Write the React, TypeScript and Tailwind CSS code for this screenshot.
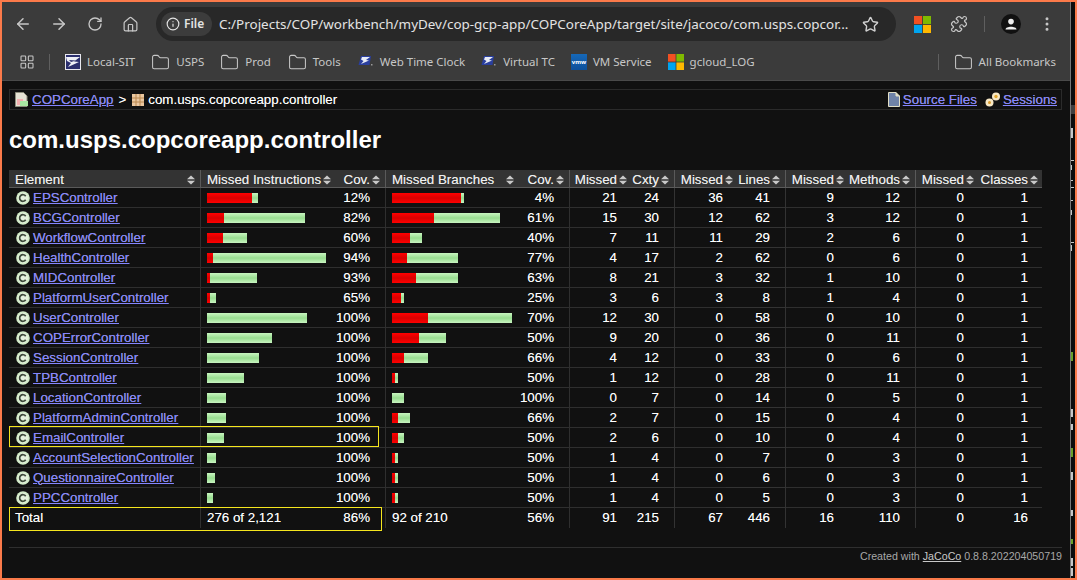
import React from "react";
import { ArrowLeft, ArrowRight, RotateCw, House, Info, Star, Puzzle, Folder, EllipsisVertical, LayoutGrid } from "lucide-react";

type Row = {
  name: string;
  mi: [number, number];
  cov: string;
  mb: [number, number];
  bcov: string;
  nums: number[];
};

const rows: Row[] = [
  { name: "EPSController", mi: [45, 6], cov: "12%", mb: [69, 3], bcov: "4%", nums: [21, 24, 36, 41, 9, 12, 0, 1] },
  { name: "BCGController", mi: [17, 81], cov: "82%", mb: [42, 66], bcov: "61%", nums: [15, 30, 12, 62, 3, 12, 0, 1] },
  { name: "WorkflowController", mi: [16, 24], cov: "60%", mb: [18, 12], bcov: "40%", nums: [7, 11, 11, 29, 2, 6, 0, 1] },
  { name: "HealthController", mi: [6, 113], cov: "94%", mb: [15, 51], bcov: "77%", nums: [4, 17, 2, 62, 0, 6, 0, 1] },
  { name: "MIDController", mi: [3, 47], cov: "93%", mb: [24, 42], bcov: "63%", nums: [8, 21, 3, 32, 1, 10, 0, 1] },
  { name: "PlatformUserController", mi: [3, 6], cov: "65%", mb: [9, 3], bcov: "25%", nums: [3, 6, 3, 8, 1, 4, 0, 1] },
  { name: "UserController", mi: [0, 100], cov: "100%", mb: [36, 84], bcov: "70%", nums: [12, 30, 0, 58, 0, 10, 0, 1] },
  { name: "COPErrorController", mi: [0, 65], cov: "100%", mb: [27, 27], bcov: "50%", nums: [9, 20, 0, 36, 0, 11, 0, 1] },
  { name: "SessionController", mi: [0, 52], cov: "100%", mb: [12, 24], bcov: "66%", nums: [4, 12, 0, 33, 0, 6, 0, 1] },
  { name: "TPBController", mi: [0, 37], cov: "100%", mb: [3, 3], bcov: "50%", nums: [1, 12, 0, 28, 0, 11, 0, 1] },
  { name: "LocationController", mi: [0, 19], cov: "100%", mb: [0, 12], bcov: "100%", nums: [0, 7, 0, 14, 0, 5, 0, 1] },
  { name: "PlatformAdminController", mi: [0, 19], cov: "100%", mb: [6, 12], bcov: "66%", nums: [2, 7, 0, 15, 0, 4, 0, 1] },
  { name: "EmailController", mi: [0, 17], cov: "100%", mb: [6, 6], bcov: "50%", nums: [2, 6, 0, 10, 0, 4, 0, 1] },
  { name: "AccountSelectionController", mi: [0, 9], cov: "100%", mb: [3, 3], bcov: "50%", nums: [1, 4, 0, 7, 0, 3, 0, 1] },
  { name: "QuestionnaireController", mi: [0, 8], cov: "100%", mb: [3, 3], bcov: "50%", nums: [1, 4, 0, 6, 0, 3, 0, 1] },
  { name: "PPCController", mi: [0, 6], cov: "100%", mb: [3, 3], bcov: "50%", nums: [1, 4, 0, 5, 0, 3, 0, 1] },
];

const totals = [91, 215, 67, 446, 16, 110, 0, 16];
// right padding and divider for the 8 counter columns
const ctrCls = [
  "pr-[3px]",
  "pr-[15px] border-r border-[#333]",
  "pr-[3px]",
  "pr-[15px] border-r border-[#333]",
  "pr-[3px]",
  "pr-[15px] border-r border-[#333]",
  "pr-[3px]",
  "pr-[14px]",
];
const ctrHead = ["Missed", "Cxty", "Missed", "Lines", "Missed", "Methods", "Missed", "Classes"];

const SortIcon = () => (
  <svg width="8" height="10" viewBox="0 0 8 10" className="shrink-0">
    <path d="M4 0.5 L8 4.2 H0 Z" fill="#c9c9c9" />
    <path d="M0 5.8 H8 L4 9.5 Z" fill="#c9c9c9" />
  </svg>
);

const ClassIcon = () => (
  <svg width="14" height="14" viewBox="0 0 14 14" className="shrink-0">
    <circle cx="7" cy="7" r="6.8" fill="#d3ecc9" />
    <circle cx="7" cy="7" r="5" fill="#e6f3df" />
    <path d="M9.7 5.2 A3.3 3.3 0 1 0 9.7 8.8" fill="none" stroke="#3d4a3a" strokeWidth="1.7" />
  </svg>
);

const UspsBoxIcon = () => (
  <svg width="16" height="16" viewBox="0 0 16 16" className="shrink-0">
    <rect width="16" height="16" fill="#e8e8ee" />
    <rect x="1" y="1" width="14" height="14" fill="#2b2f6e" />
    <path d="M1 3 H15 L9 7.5 L14 8 L3 13 L6 9 L2 7 Z" fill="#eef0f6" />
    <path d="M4 6 L11 6.5 L6 8 Z" fill="#2b2f6e" />
  </svg>
);

// small slanted eagle used by the two time-clock bookmarks
const UspsEagle = () => (
  <svg width="16" height="16" viewBox="0 0 16 16" className="shrink-0">
    <path d="M3 2 H13 L11.5 11 H0.5 Z" fill="#2a3f9e" />
    <path d="M4 3 H12 L8 6 L11 6.5 L3 10 L5.5 7 L3 5.5 Z" fill="#e8ecf6" />
    <rect x="13" y="10" width="1.5" height="1.5" fill="#9a9a9a" />
  </svg>
);

const MsLogo = ({ size = 16 }: { size?: number }) => (
  <svg width={size} height={size} viewBox="0 0 16 16" className="shrink-0">
    <rect width="7.6" height="7.6" fill="#f25022" />
    <rect x="8.4" width="7.6" height="7.6" fill="#7fba00" />
    <rect y="8.4" width="7.6" height="7.6" fill="#00a4ef" />
    <rect x="8.4" y="8.4" width="7.6" height="7.6" fill="#ffb900" />
  </svg>
);

const FolderIcon = () => <Folder size={19} strokeWidth={1.3} className="shrink-0 text-[#c7c7c7]" />;

const Bookmark = ({ icon, label, cls }: { icon: React.ReactNode; label: string; cls: string }) => (
  <div className={`flex items-center gap-[6px] ${cls}`}>
    {icon}
    <span>{label}</span>
  </div>
);

const Bar = ({ red, green }: { red: number; green: number }) => (
  <div className="flex h-[10px]">
    <div className="h-full bg-[linear-gradient(#ff0000,#d80000_50%,#ff0000)]" style={{ width: red }} />
    <div className="h-full bg-[linear-gradient(#c8f5c0,#98dd90_50%,#c8f5c0)]" style={{ width: green }} />
  </div>
);

const ReportIcon = () => (
  <svg width="14" height="15" viewBox="0 0 14 15" className="shrink-0">
    <path d="M0.5 0.5 H8.5 L12 4 V14.5 H0.5 Z" fill="#e6e2d4" stroke="#8d8d7c" />
    <rect x="2" y="7" width="6" height="6" fill="#f3b0b0" />
    <rect x="5" y="9" width="8" height="5" fill="#a9e8a3" />
  </svg>
);

const PackageIcon = () => (
  <svg width="12" height="12" viewBox="0 0 12 12" className="shrink-0">
    <rect width="12" height="12" fill="#eac7a0" />
    <path d="M4 0 V12 M8 0 V12 M0 4 H12 M0 8 H12" stroke="#b98850" strokeWidth="1" />
  </svg>
);

const SourceIcon = () => (
  <svg width="12" height="15" viewBox="0 0 12 15" className="shrink-0">
    <path d="M0.5 0.5 H8 L11.5 4 V14.5 H0.5 Z" fill="#6f83a8" stroke="#e2dfc6" />
    <path d="M8 0.5 V4 H11.5" fill="#e2dfc6" stroke="#e2dfc6" />
  </svg>
);

const SessionIcon = () => (
  <svg width="16" height="15" viewBox="0 0 16 15" className="shrink-0">
    <circle cx="4.5" cy="10.5" r="4" fill="#f7e7c4" />
    <circle cx="4.5" cy="10.5" r="1.5" fill="#d99a2b" />
    <circle cx="11" cy="4.5" r="4" fill="#f7e7c4" />
    <circle cx="11" cy="4.5" r="1.7" fill="#e3a72f" />
  </svg>
);

// fragments of the window behind, at the right edge
const EdgeSliver = () => (
  <svg width="4" height="576" viewBox="0 0 4 576" className="shrink-0 bg-[#0c0c0c]">
    <rect y="103" width="4" height="9" fill="#3f3f3f" />
    <g fill="#c8c8c8">
      <rect y="126" width="2" height="10" />
      <rect y="158" width="3" height="1" />
      <rect y="163" width="1" height="5" />
      <rect y="178" width="2" height="1" />
      <rect y="185" width="3" height="1" />
      <rect y="198" width="2" height="1" />
      <rect y="208" width="1" height="5" />
      <rect y="240" width="3" height="1" />
      <rect y="243" width="1" height="6" />
      <rect y="407" width="2" height="8" />
      <rect y="422" width="2" height="6" />
      <rect y="470" width="2" height="8" />
      <rect y="508" width="2" height="6" />
      <rect y="556" width="2" height="8" />
      <rect y="566" width="2" height="8" />
    </g>
    <g fill="#6aa12a">
      <rect y="350" width="2" height="9" />
      <rect y="446" width="2" height="9" />
      <rect y="537" width="2" height="5" />
    </g>
  </svg>
);

// 100% is wider than the space left of the padding, so it has to grow leftwards
const Pct = ({ value }: { value: string }) => <div className="flex justify-end whitespace-nowrap">{value}</div>;

export default function App() {
  const linkCls = "text-[#8585ff] underline";
  return (
    <div className="flex h-[580px] w-[1077px] overflow-hidden border-2 border-[#fb7a4a] bg-[#0c0c0c] font-['Liberation_Sans',Arial,sans-serif]">
      <div className="flex w-[1069px] shrink-0 flex-col border-r border-[#777]">
        {/* browser toolbar */}
        <div className="flex h-[79px] shrink-0 flex-col border-b border-[#4a4a4a] bg-[#3b3b3b] font-['Noto_Sans',sans-serif]">
          <div className="flex h-[42px] items-center pt-[2px] text-[#c7c7c7]">
            <div className="flex items-center pl-[12px]">
              <ArrowLeft size={18} className="mr-[18px]" />
              <ArrowRight size={18} className="mr-[18px]" />
              <RotateCw size={16} className="mr-[19px] ml-[1px]" />
              <House size={17} strokeWidth={1.7} />
            </div>
            <div className="ml-[17px] flex h-[34px] w-[740px] items-center rounded-full bg-[#282828] pl-[5px]">
              <div className="flex h-[24px] w-[51px] items-center gap-[4px] rounded-full bg-[#3c3c3c] pl-[5px] text-[12px] font-semibold text-[#e3e3e3]">
                <Info size={14} />
                <span>File</span>
              </div>
              <span className="ml-[7px] w-[627px] text-[13.45px] leading-[20px] whitespace-nowrap text-[#e3e3e3]">
                C:/Projects/COP/workbench/myDev/cop-gcp-app/COPCoreApp/target/site/jacoco/com.usps.copcor...
              </span>
              <Star size={17} className="ml-[16px] text-[#d0d0d0]" />
            </div>
            <div className="ml-[18px] flex items-center">
              <MsLogo size={17} />
              <Puzzle size={18} strokeWidth={1.6} className="ml-[19px]" />
              <div className="ml-[16px] h-[16px] w-[1px] bg-[#5f5f5f]" />
              <div className="ml-[16px] flex h-[20px] w-[20px] items-center justify-center rounded-full bg-[#111]">
                <svg width="12" height="12" viewBox="0 0 12 12">
                  <circle cx="6" cy="3.6" r="2.8" fill="#eee" />
                  <path d="M0.5 11.5 C0.5 7.8 11.5 7.8 11.5 11.5 Z" fill="#eee" />
                </svg>
              </div>
              <EllipsisVertical size={18} className="ml-[17px]" />
            </div>
          </div>
          <div className="flex h-[36px] items-center text-[11.5px] text-[#c7c7c7]">
            <LayoutGrid size={16} strokeWidth={1.6} className="ml-[17px]" />
            <div className="ml-[14px] h-[16px] w-[1px] bg-[#5f5f5f]" />
            <Bookmark cls="ml-[15px]" icon={<UspsBoxIcon />} label="Local-SIT" />
            <Bookmark cls="ml-[16px]" icon={<FolderIcon />} label="USPS" />
            <Bookmark cls="ml-[16px]" icon={<FolderIcon />} label="Prod" />
            <Bookmark cls="ml-[17px]" icon={<FolderIcon />} label="Tools" />
            <Bookmark cls="ml-[17px]" icon={<UspsEagle />} label="Web Time Clock" />
            <Bookmark cls="ml-[16px]" icon={<UspsEagle />} label="Virtual TC" />
            <Bookmark
              cls="ml-[16px]"
              icon={
                <span className="flex h-[16px] w-[16px] items-center justify-center bg-[linear-gradient(#1668b8,#0d4f9a)] text-[6px] font-bold text-white">
                  vmw
                </span>
              }
              label="VM Service"
            />
            <Bookmark cls="ml-[16px]" icon={<MsLogo />} label="gcloud_LOG" />
            <div className="ml-auto flex items-center pr-[14px]">
              <div className="mr-[15px] h-[16px] w-[1px] bg-[#5f5f5f]" />
              <Bookmark cls="" icon={<FolderIcon />} label="All Bookmarks" />
            </div>
          </div>
        </div>

        {/* jacoco page */}
        <div className="flex-1 bg-[#111] pt-[8px] pr-[7px] pl-[7px] text-[13.33px] leading-[16px] text-white [text-shadow:0_0_0.6px_rgba(255,255,255,0.55)]">
          <div className="mr-[1px] flex h-[21px] items-center border border-[#2b2b2b] pr-[4px] pl-[5px]">
            <ReportIcon />
            <a className={`ml-[3px] ${linkCls}`}>COPCoreApp</a>
            <span className="ml-[5px]">&gt;</span>
            <span className="ml-[6px]"><PackageIcon /></span>
            <span className="ml-[4px]">com.usps.copcoreapp.controller</span>
            <div className="ml-auto flex items-center">
              <SourceIcon />
              <a className={`ml-[3px] ${linkCls}`}>Source Files</a>
              <span className="ml-[8px]"><SessionIcon /></span>
              <a className={`ml-[2px] ${linkCls}`}>Sessions</a>
            </div>
          </div>

          <h1 className="mt-[15px] h-[30px] text-[24px] leading-[30px] font-bold [text-shadow:none]">com.usps.copcoreapp.controller</h1>

          <div className="relative mt-[15px] w-[1033px]">
            <table className="w-[1033px] table-fixed border-separate border-spacing-0">
              <colgroup>
                <col className="w-[192px]" />
                <col className="w-[140px]" />
                <col className="w-[45px]" />
                <col className="w-[139px]" />
                <col className="w-[45px]" />
                <col className="w-[50px]" />
                <col className="w-[55px]" />
                <col className="w-[51px]" />
                <col className="w-[60px]" />
                <col className="w-[51px]" />
                <col className="w-[79px]" />
                <col className="w-[51px]" />
                <col className="w-[75px]" />
              </colgroup>
              <thead>
                <tr className="h-[18px] bg-[#333] leading-[15px] font-normal text-[#eee]">
                  <th className="border-r border-b border-[#5a5a5a] pt-[2px] pr-[5px] pl-[6px] font-normal">
                    <div className="flex items-center justify-between"><span>Element</span><SortIcon /></div>
                  </th>
                  <th className="border-b border-[#5a5a5a] pt-[2px] pr-[10px] pl-[6px] font-normal">
                    <div className="flex items-center justify-between"><span>Missed Instructions</span><SortIcon /></div>
                  </th>
                  <th className="border-r border-b border-[#5a5a5a] pt-[2px] pr-[15px] font-normal">
                    <div className="flex items-center justify-end"><span>Cov.</span><span className="-mr-[10px] ml-[2px]"><SortIcon /></span></div>
                  </th>
                  <th className="border-b border-[#5a5a5a] pt-[2px] pr-[11px] pl-[6px] font-normal">
                    <div className="flex items-center justify-between"><span>Missed Branches</span><SortIcon /></div>
                  </th>
                  <th className="border-r border-b border-[#5a5a5a] pt-[2px] pr-[15px] font-normal">
                    <div className="flex items-center justify-end"><span>Cov.</span><span className="-mr-[10px] ml-[2px]"><SortIcon /></span></div>
                  </th>
                  {ctrHead.map((h, i) => (
                    <th
                      key={i}
                      className={`border-b pt-[2px] font-normal ${i % 2 === 1 && i < 7 ? "border-r border-[#5a5a5a] pr-[15px]" : i === 7 ? "border-[#5a5a5a] pr-[14px]" : "border-[#5a5a5a] pr-[3px]"}`}
                    >
                      <div className="flex items-center justify-end"><span>{h}</span><span className="-mr-[10px] ml-[2px]"><SortIcon /></span></div>
                    </th>
                  ))}
                </tr>
              </thead>
              <tbody>
                {rows.map((r) => (
                  <tr key={r.name} className="h-[20px]">
                    <td className="border-r border-b border-[#2f2f2f] pl-[7px]">
                      <div className="flex items-center gap-[3px]">
                        <ClassIcon />
                        <a className={`whitespace-nowrap ${linkCls}`}>{r.name}</a>
                      </div>
                    </td>
                    <td className="border-b border-[#2f2f2f] pl-[6px]"><Bar red={r.mi[0]} green={r.mi[1]} /></td>
                    <td className="border-r border-b border-[#2f2f2f] pr-[15px]"><Pct value={r.cov} /></td>
                    <td className="border-b border-[#2f2f2f] pl-[6px]"><Bar red={r.mb[0]} green={r.mb[1]} /></td>
                    <td className="border-r border-b border-[#2f2f2f] pr-[15px]"><Pct value={r.bcov} /></td>
                    {r.nums.map((n, i) => (
                      <td key={i} className={`border-b border-[#2f2f2f] text-right ${ctrCls[i]}`}>{n}</td>
                    ))}
                  </tr>
                ))}
              </tbody>
              <tfoot>
                <tr className="h-[20px]">
                  <td className="border-r border-[#2f2f2f] pl-[6px]">Total</td>
                  <td className="pl-[6px]">276 of 2,121</td>
                  <td className="border-r border-[#2f2f2f] pr-[15px]"><Pct value="86%" /></td>
                  <td className="pl-[6px]">92 of 210</td>
                  <td className="border-r border-[#2f2f2f] pr-[15px]"><Pct value="56%" /></td>
                  {totals.map((n, i) => (
                    <td key={i} className={`border-[#2f2f2f] text-right ${ctrCls[i]}`}>{n}</td>
                  ))}
                </tr>
              </tfoot>
            </table>
            {/* yellow annotation boxes */}
            <div className="absolute top-[256px] left-0 h-[21px] w-[370px] border border-[#f5e61e]" />
            <div className="absolute top-[337px] left-0 h-[24px] w-[373px] border border-[#f5e61e]" />
          </div>

          <div className="mt-[19px] mr-[1px] border-t border-[#2f2f2f] pt-[1px] text-right text-[10.67px] leading-[14px] text-[#a8a8a8] [text-shadow:none]">
            Created with <a className="text-[#c8c8c8] underline">JaCoCo</a> 0.8.8.202204050719
          </div>
        </div>
      </div>
      <EdgeSliver />
    </div>
  );
}
